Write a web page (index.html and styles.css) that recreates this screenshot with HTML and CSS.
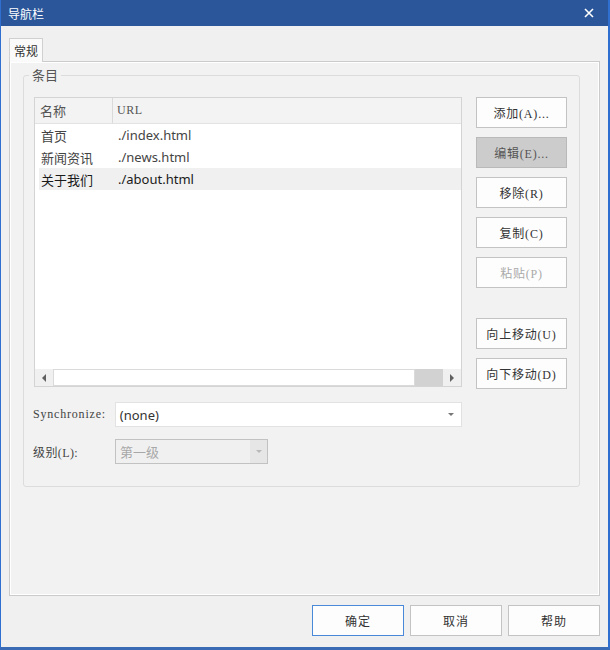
FILE: index.html
```html
<!DOCTYPE html>
<html lang="zh-CN">
<head>
  <meta charset="UTF-8">
  <title>导航栏</title>
  <link rel="stylesheet" href="styles.css">
</head>
<body>
  <!-- Dialog window -->
  <div class="window">
    <!-- Title bar -->
    <div class="titlebar">
      <span class="title">导航栏</span>
      <span class="close" title="关闭">
        <svg width="10" height="10" viewBox="0 0 10 10">
          <path d="M1 1 L9 9 M9 1 L1 9" stroke="#fff" stroke-width="1.6" fill="none"/>
        </svg>
      </span>
    </div>

    <div class="client">
      <!-- Tab strip -->
      <div class="tabstrip">
        <div class="tab">常规</div>
      </div>

      <div class="tab-page">
        <fieldset class="group">
          <legend>条目</legend>
          <div class="group-body">
            <div class="left-col">
              <!-- List of nav items -->
              <div class="listview">
                <div class="lv-header">
                  <div class="hd-name">名称</div>
                  <div class="hd-url ui-font">URL</div>
                </div>
                <div class="lv-rows">
                  <div class="lv-row"><span class="cell-name">首页</span><span>./index.html</span></div>
                  <div class="lv-row"><span class="cell-name">新闻资讯</span><span>./news.html</span></div>
                  <div class="lv-row selected"><span class="cell-name">关于我们</span><span>./about.html</span></div>
                </div>
                <div class="hscroll">
                  <div class="sb-btn"><span class="arrow-left"></span></div>
                  <div class="sb-track"></div>
                  <div class="sb-thumb"></div>
                  <div class="sb-btn"><span class="arrow-right"></span></div>
                </div>
              </div>

              <div class="field-row sync-row">
                <label class="field-label ui-font">Synchronize:</label>
                <div class="combo">
                  <span>(none)</span>
                  <span class="combo-arrow"></span>
                </div>
              </div>

              <div class="field-row level-row">
                <label class="field-label ui-font">级别(L):</label>
                <div class="combo disabled">
                  <span>第一级</span>
                  <span class="combo-btn"><span class="combo-arrow"></span></span>
                </div>
              </div>
            </div>

            <!-- Item action buttons -->
            <div class="btn-col">
              <button class="btn">添加(A)...</button>
              <button class="btn pressed">编辑(E)...</button>
              <button class="btn">移除(R)</button>
              <button class="btn">复制(C)</button>
              <button class="btn" disabled>粘贴(P)</button>
              <button class="btn btn-up">向上移动(U)</button>
              <button class="btn">向下移动(D)</button>
            </div>
          </div>
        </fieldset>
      </div>

      <!-- OK / Cancel / Help -->
      <div class="dialog-buttons">
        <button class="btn default">确定</button>
        <button class="btn">取消</button>
        <button class="btn">帮助</button>
      </div>
    </div>
  </div>
</body>
</html>
```

FILE: styles.css
```css
/* Page reset */
body {
  margin: 0;
  background: #f0f0f0;
  font-family: "Noto Sans", "Noto Sans CJK SC", sans-serif;
  color: #333;
}

/* Old-style dialog font: serif latin, CJK from Noto */
.ui-font,
.btn {
  font-family: "Liberation Serif", "Noto Sans CJK SC", serif;
}

/* Window frame */
.window {
  width: 610px;
  height: 650px;
  box-sizing: border-box;
  background: #f0f0f0;
  border-left: 1px solid #2f6fd0;
  border-right: 2px solid #2f6fd0;
  border-bottom: 3px solid #3b6bb5;
  display: flex;
  flex-direction: column;
}

.titlebar {
  height: 26px;
  flex: none;
  background: #2b579a;
  display: flex;
  align-items: center;
  justify-content: space-between;
  padding-left: 7px;
}

.title {
  color: #fff;
  font-family: "Noto Sans CJK SC", sans-serif;
  font-size: 12px;
}

.close {
  width: 10px;
  height: 10px;
  margin-right: 14px;
  display: flex;
}

.client {
  padding: 12px 8px 0 8px;
}

/* Tabs */
.tabstrip {
  display: flex;
  height: 23px;
}

.tab {
  width: 34px;
  height: 24px;
  box-sizing: border-box;
  border: 1px solid #d0d0d0;
  border-bottom: none;
  background: #fafafa;
  font-family: "Noto Sans CJK SC", sans-serif;
  font-size: 12px;
  line-height: 23px;
  text-align: center;
  position: relative;
  z-index: 1;
}

.tab-page {
  height: 535px;
  box-sizing: border-box;
  border: 1px solid #cbcbcb;
  background: #f2f2f2;
  box-shadow: inset 1px 1px 0 #fff, inset -1px -1px 0 #fff;
  padding: 4px 19px 0 13px;
}

/* Group box */
.group {
  margin: 0;
  min-width: 0;
  border: 1px solid #dcdcdc;
  border-radius: 3px;
  padding: 13px 12px 22px 10px;
}

.group legend {
  font-family: "Noto Sans CJK SC", sans-serif;
  font-size: 13px;
  line-height: 18px;
  color: #555;
  padding: 0 3px;
  margin-left: -5px;
}

.group-body {
  display: flex;
  gap: 14px;
}

.left-col {
  width: 428px;
  display: flex;
  flex-direction: column;
}

/* List view */
.listview {
  height: 290px;
  box-sizing: border-box;
  border: 1px solid #d4d4d4;
  background: #fff;
  display: flex;
  flex-direction: column;
  font-size: 13px;
}

.lv-header {
  height: 25px;
  flex: none;
  display: flex;
  background: #f3f3f3;
  border-bottom: 1px solid #e2e2e2;
  color: #555;
}

.hd-name {
  width: 72px;
  padding-left: 5px;
  border-right: 1px solid #dadada;
  line-height: 25px;
  font-family: "Noto Sans CJK SC", sans-serif;
}

.hd-url {
  padding-left: 4px;
  font-size: 12px;
  line-height: 25px;
  letter-spacing: 0.6px;
}

.lv-rows {
  flex: 1;
}

.lv-row {
  height: 22px;
  margin-left: 4px;
  padding-left: 2px;
  display: flex;
  align-items: center;
  color: #444;
}

.lv-row.selected {
  background: #f0f0f0;
  color: #1a1a1a;
}

.cell-name {
  width: 77px;
  font-family: "Noto Sans CJK SC", sans-serif;
}

/* Horizontal scroll bar */
.hscroll {
  height: 17px;
  flex: none;
  display: flex;
  background: #f0f0f0;
}

.sb-btn {
  width: 18px;
  display: flex;
  align-items: center;
  justify-content: center;
}

.arrow-left {
  border-top: 4px solid transparent;
  border-bottom: 4px solid transparent;
  border-right: 4px solid #606060;
}

.arrow-right {
  border-top: 4px solid transparent;
  border-bottom: 4px solid transparent;
  border-left: 4px solid #606060;
}

.sb-track {
  flex: 1;
  box-sizing: border-box;
  background: #fff;
  border: 1px solid #dadada;
}

.sb-thumb {
  width: 28px;
  background: #d2d2d2;
}

/* Form rows below the list */
.field-row {
  height: 25px;
  display: flex;
  align-items: center;
}

.sync-row {
  margin-top: 15px;
}

.level-row {
  margin-top: 12px;
}

.field-label {
  width: 82px;
  margin-left: -1px;
  font-size: 12px;
  letter-spacing: 0.8px;
  color: #444;
}

.level-row .field-label {
  letter-spacing: 0.4px;
}

.combo {
  width: 348px;
  height: 25px;
  box-sizing: border-box;
  border: 1px solid #e2e2e2;
  background: #fff;
  display: flex;
  align-items: center;
  justify-content: space-between;
  padding-left: 4px;
  padding-right: 7px;
  font-size: 13px;
  color: #333;
}

.combo-arrow {
  border-left: 3px solid transparent;
  border-right: 3px solid transparent;
  border-top: 3px solid #777;
}

.combo.disabled {
  width: 153px;
  border-color: #c2c2c2;
  background: #f0f0f0;
  color: #a8a8a8;
  padding-right: 0;
  font-family: "Noto Sans CJK SC", sans-serif;
}

.combo-btn {
  width: 17px;
  height: 100%;
  background: #e6e6e6;
  display: flex;
  align-items: center;
  justify-content: center;
}

.combo.disabled .combo-arrow {
  border-top-color: #b8b8b8;
}

/* Push buttons */
.btn-col {
  width: 91px;
  display: flex;
  flex-direction: column;
  gap: 9px;
}

.btn {
  height: 31px;
  box-sizing: border-box;
  border: 1px solid #c3c3c3;
  background: #fdfdfd;
  color: #333;
  font-size: 12px;
  letter-spacing: 0.8px;
  padding: 0;
}

.btn.pressed {
  background: #cccccc;
  border-color: #b9b9b9;
  color: #555;
}

.btn:disabled {
  color: #aaa;
}

.btn-up {
  margin-top: 21px;
}

.dialog-buttons {
  margin-top: 9px;
  display: flex;
  justify-content: flex-end;
  gap: 6px;
}

.dialog-buttons .btn {
  width: 92px;
  height: 31px;
  letter-spacing: 1px;
}

.btn.default {
  border-color: #4a88da;
}
```
